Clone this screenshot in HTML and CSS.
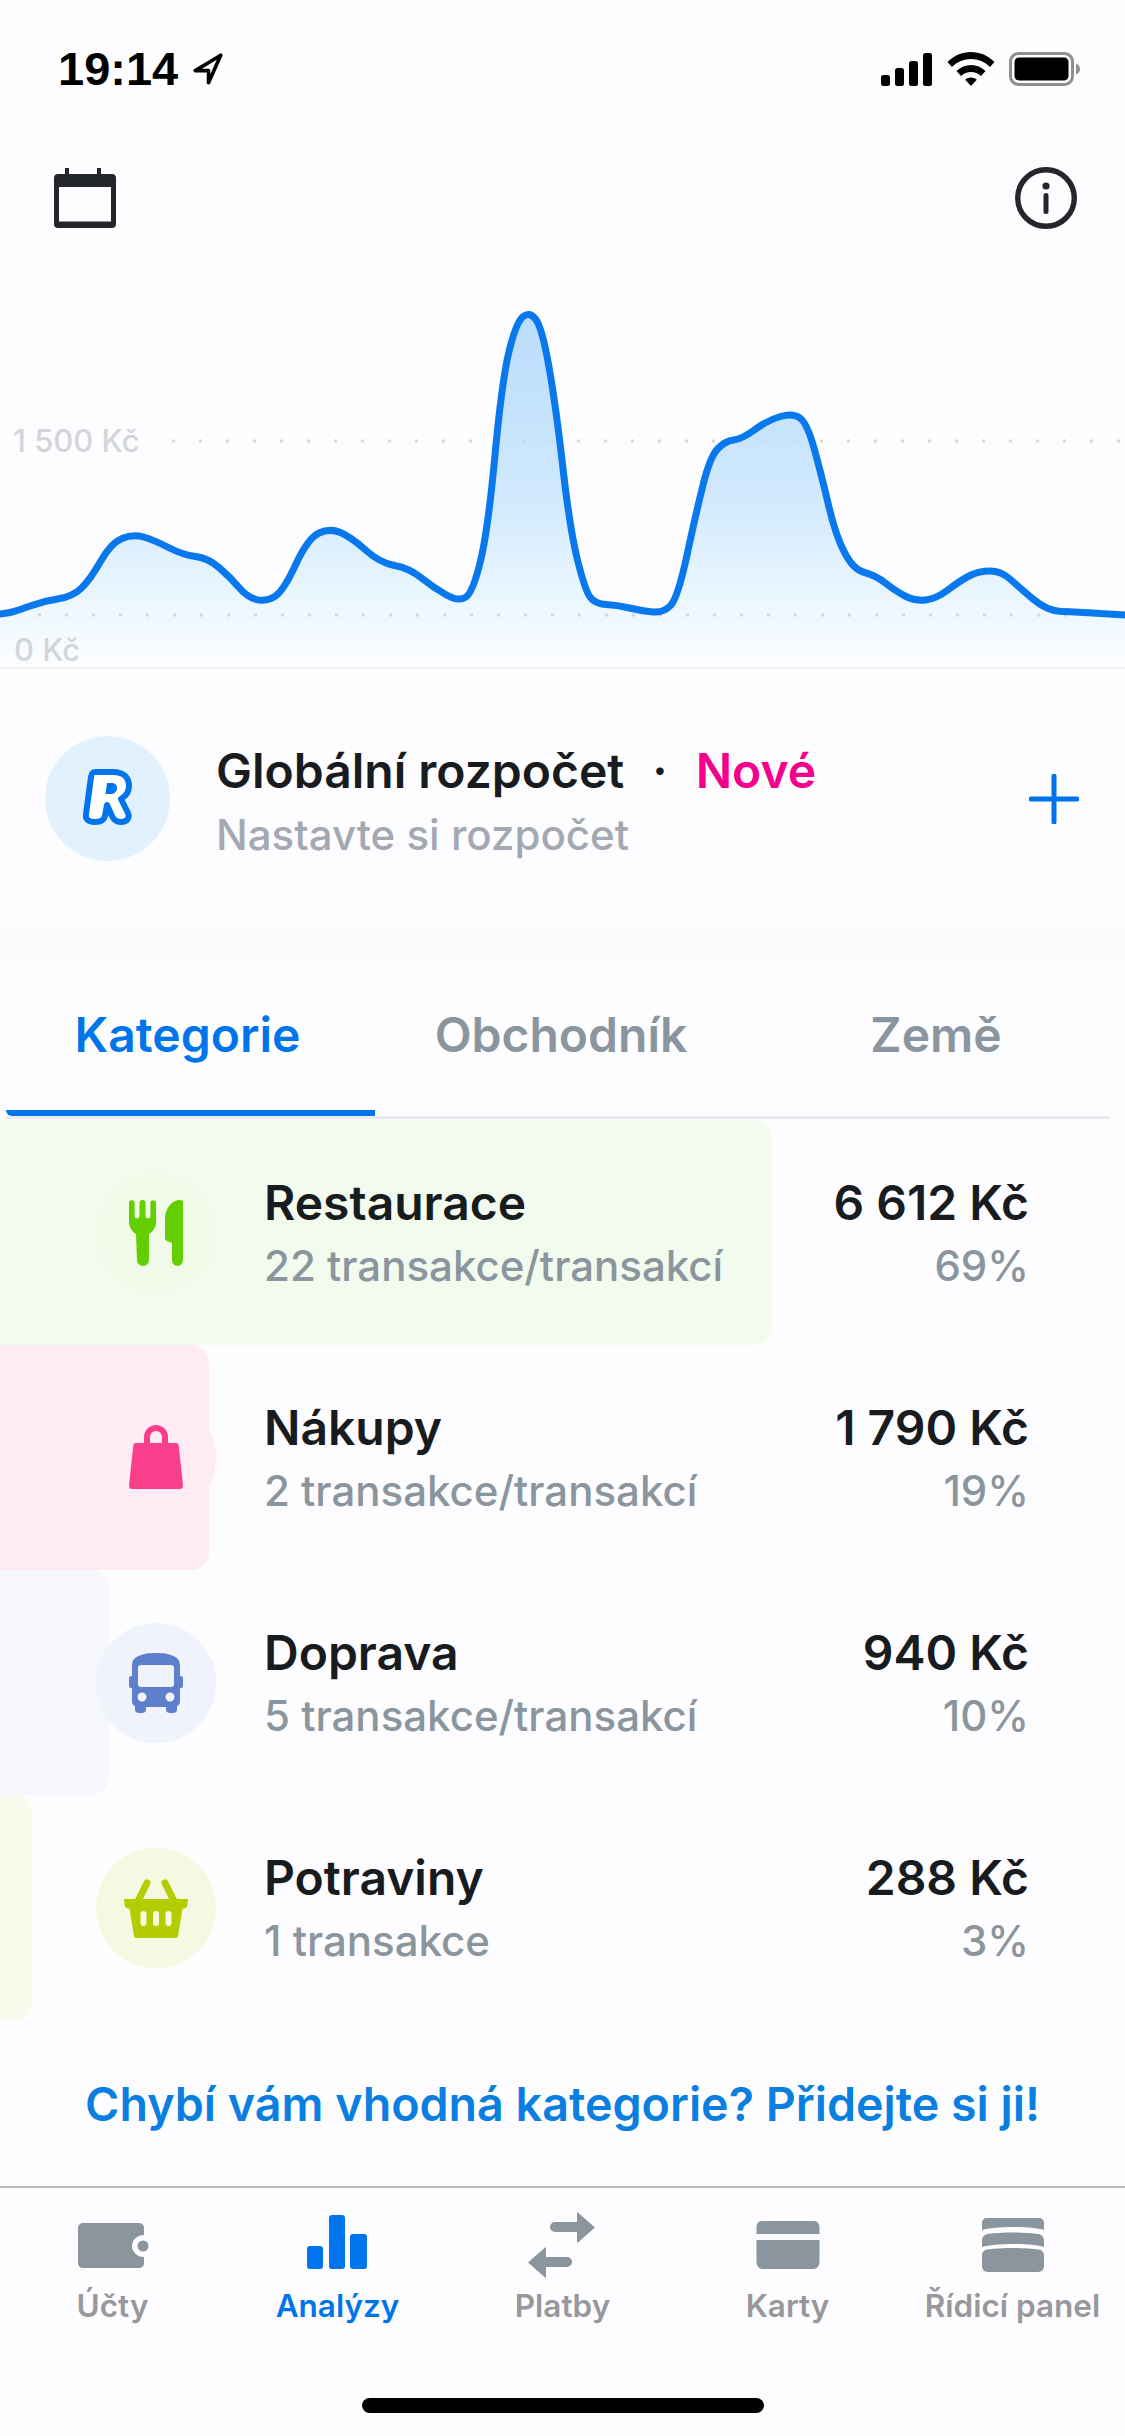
FILE: index.html
```html
<!DOCTYPE html>
<html lang="cs">
<head>
<meta charset="utf-8">
<title>Analýzy</title>
<link rel="stylesheet" href="styles.css">
</head>
<body>
<main class="screen">
  <header class="status">
    <div class="status-left">
      <span class="time">19:14</span>
      <svg class="loc" viewBox="0 0 30 32"><path d="M27 3 L3 17.500 H15.500 V29 Z" fill="none" stroke="#000" stroke-width="3.400" stroke-linejoin="round"/></svg>
    </div>
    <div class="status-right">
      <svg class="signal" viewBox="0 0 52 33"><rect x="0" y="22" width="9" height="11" rx="2.500"/><rect x="14" y="15" width="9" height="18" rx="2.500"/><rect x="28" y="8" width="9" height="25" rx="2.500"/><rect x="42" y="0" width="9" height="33" rx="2.500"/></svg>
      <svg class="wifi" viewBox="0 0 48 34"><path d="M24 0C15 0 7 3.500 0.500 10L5 15C10 9.800 17 7 24 7S38 9.800 43 15L47.500 10C41 3.500 33 0 24 0Z"/><path d="M24 13C18.500 13 13.500 15 9.500 19L14 24C16.800 21.300 20.300 20 24 20S31.200 21.300 34 24L38.500 19C34.500 15 29.500 13 24 13Z"/><path d="M24 25.500C21.800 25.500 19.800 26.300 18.200 27.800L24 34L29.800 27.800C28.200 26.300 26.200 25.500 24 25.500Z"/></svg>
      <svg class="battery" viewBox="0 0 72 34"><rect x="1.500" y="1.500" width="62" height="31" rx="8" fill="none" stroke="#8f8f8f" stroke-width="3"/><rect x="5.500" y="5.500" width="54" height="23" rx="4.500" fill="#000"/><path d="M67 11.500C69.500 12.500 71 14.500 71 17S69.500 21.500 67 22.500Z" fill="#8f8f8f"/></svg>
    </div>
  </header>

  <nav class="toolbar">
    <svg class="cal" viewBox="0 0 62 60"><path d="M11 0h4v7h-4zM43 0h4v7h-4z" fill="#23272b"/><path fill-rule="evenodd" d="M4 6H58A4 4 0 0 1 62 10V56A4 4 0 0 1 58 60H4A4 4 0 0 1 0 56V10A4 4 0 0 1 4 6ZM5 19V53.500H57V19Z" fill="#23272b"/></svg>
    <svg class="info" viewBox="0 0 62 62"><circle cx="31" cy="31" r="28.300" fill="none" stroke="#23272b" stroke-width="5.400"/><circle cx="31" cy="19" r="3.600" fill="#23272b"/><rect x="28.500" y="26" width="5" height="21" rx="2.500" fill="#23272b"/></svg>
  </nav>

  <section class="chart">
    <svg class="chart-svg" viewBox="0 255 1125 412">
      <defs>
        <linearGradient id="area" gradientUnits="userSpaceOnUse" x1="0" y1="310" x2="0" y2="667">
          <stop offset="0" stop-color="#b8dcfb"/>
          <stop offset="0.5" stop-color="#cfe8fd"/>
          <stop offset="0.8" stop-color="#e9f6fe"/>
          <stop offset="1" stop-color="#fdfdff"/>
        </linearGradient>
      </defs>
      <path class="area" d="M0 667 V614 L7 613 Q14 612 28.500 606.500 Q43 601 57.500 599 Q72 597 81 588.500 Q90 580 100.500 561.500 Q111 543 122 538.500 Q133 534 143.500 537 Q154 540 168.500 547.500 Q183 555 195.500 556.500 Q208 558 219 567.500 Q230 577 238.500 587 Q247 597 256 599.500 Q265 602 274 597 Q283 592 295.500 565 Q308 538 319 533 Q330 528 340.500 532.500 Q351 537 365.500 550 Q380 563 394.500 565.500 Q409 568 421.500 578 Q434 588 446.500 595 Q459 602 466 597 Q473 592 480.500 561 Q488 530 495 455 Q502 380 509 351.500 Q516 323 522.500 317 Q529 311 535.500 319 Q542 327 549 367 Q556 407 563 468.500 Q570 530 577.500 560 Q585 590 590 597 Q595 604 606 604.500 Q617 605 629.500 608 Q642 611 653 612 Q664 613 671 605 Q678 597 687 555 Q696 513 703 485 Q710 457 717.500 449 Q725 441 733.500 440 Q742 439 755 429.500 Q768 420 780.500 416.500 Q793 413 800 418 Q807 423 814 448 Q821 473 828.500 505 Q836 537 845 553.500 Q854 570 864.500 572.500 Q875 575 886 583.500 Q897 592 906 596.500 Q915 601 925.500 600 Q936 599 948.500 589.500 Q961 580 970 575.500 Q979 571 990 571 Q1001 571 1010 579 Q1019 587 1033 599 Q1047 611 1061.500 611.500 Q1076 612 1100.500 613.500 L1125 615 V667 Z"/>
      <line class="dots" x1="172" y1="441" x2="1125" y2="441"/>
      <line class="dots" x1="38" y1="615" x2="1125" y2="615"/>
      <path class="line" d="M0 614 L7 613 Q14 612 28.500 606.500 Q43 601 57.500 599 Q72 597 81 588.500 Q90 580 100.500 561.500 Q111 543 122 538.500 Q133 534 143.500 537 Q154 540 168.500 547.500 Q183 555 195.500 556.500 Q208 558 219 567.500 Q230 577 238.500 587 Q247 597 256 599.500 Q265 602 274 597 Q283 592 295.500 565 Q308 538 319 533 Q330 528 340.500 532.500 Q351 537 365.500 550 Q380 563 394.500 565.500 Q409 568 421.500 578 Q434 588 446.500 595 Q459 602 466 597 Q473 592 480.500 561 Q488 530 495 455 Q502 380 509 351.500 Q516 323 522.500 317 Q529 311 535.500 319 Q542 327 549 367 Q556 407 563 468.500 Q570 530 577.500 560 Q585 590 590 597 Q595 604 606 604.500 Q617 605 629.500 608 Q642 611 653 612 Q664 613 671 605 Q678 597 687 555 Q696 513 703 485 Q710 457 717.500 449 Q725 441 733.500 440 Q742 439 755 429.500 Q768 420 780.500 416.500 Q793 413 800 418 Q807 423 814 448 Q821 473 828.500 505 Q836 537 845 553.500 Q854 570 864.500 572.500 Q875 575 886 583.500 Q897 592 906 596.500 Q915 601 925.500 600 Q936 599 948.500 589.500 Q961 580 970 575.500 Q979 571 990 571 Q1001 571 1010 579 Q1019 587 1033 599 Q1047 611 1061.500 611.500 Q1076 612 1100.500 613.500 L1125 615"/>
      <text class="axis" x="13" y="452">1 500 Kč</text>
      <text class="axis" x="14" y="661">0 Kč</text>
    </svg>
  </section>

  <section class="budget">
    <div class="avatar">
      <svg class="logo" viewBox="0 0 50 56"><path d="M12 3H30C41 3 46 9 46 17C46 23 43 27 38 30L45 44C47 49 44 53 38 53C34 53 31 52 29 47L24 36L22 47C21 51 18 53 12 53C5 53 2 50 3 45L8 8C8.500 5 9 3 12 3Z" fill="#fff" stroke="#0075eb" stroke-width="6" stroke-linejoin="round"/><path d="M24 14H28C32 14 34 16 34 19C34 23 31 25 27 25H22.500Z" fill="#0075eb"/></svg>
    </div>
    <div class="budget-text">
      <div class="budget-title"><span>Globální rozpočet</span><span class="sep">·</span><span class="new">Nové</span></div>
      <div class="budget-sub">Nastavte si rozpočet</div>
    </div>
    <svg class="plus" viewBox="0 0 50 50"><path d="M25 2V48M2 25H48" stroke="#0075eb" stroke-width="5" stroke-linecap="round"/></svg>
  </section>

  <section class="tabs-wrap">
    <div class="tabs">
      <div class="tab active">Kategorie</div>
      <div class="tab">Obchodník</div>
      <div class="tab">Země</div>
    </div>
    <div class="indicator"></div>
    <div class="track"></div>
  </section>

  <section class="rows">
    <article class="row">
      <div class="bar bar-green" style="width:772px"></div>
      <div class="row-body">
        <div class="cat cat-green">
          <svg viewBox="0 0 120 120"><path fill="#63cf00" d="M33 30A2.800 2.800 0 0 1 38.600 30V43A2.400 2.400 0 0 0 43.500 43V30A2.900 2.900 0 0 1 49.500 30V43A2.400 2.400 0 0 0 54.400 43V30A2.800 2.800 0 0 1 60 30V49C60 55 56 59 53 61L53 87A6 6 0 0 1 41 87L40 61C37 59 33 55 33 49Z"/><path fill="#63cf00" d="M87 29V87A5.500 6 0 0 1 76 87V70L71 68Q69 67.500 69 65V46C69 35 76 27 84 27Q87 27 87 29Z"/></svg>
        </div>
        <div class="row-main"><div class="row-title">Restaurace</div><div class="row-sub">22 transakce/transakcí</div></div>
        <div class="row-side"><div class="row-title">6 612 Kč</div><div class="row-sub">69%</div></div>
      </div>
    </article>
    <article class="row">
      <div class="bar bar-pink" style="width:209px"></div>
      <div class="row-body">
        <div class="cat cat-pink">
          <svg viewBox="0 0 120 120"><path fill="#f93f8c" fill-rule="evenodd" d="M48 45V39A12 12 0 0 1 72 39V45H80C81.500 45 82.500 46 82.700 47.500L87 87C87.300 89.500 86 91 84 91H36C34 91 32.700 89.500 33 87L37.300 47.500C37.500 46 38.500 45 40 45ZM54 45H66V39A6 6 0 0 0 54 39Z"/></svg>
        </div>
        <div class="row-main"><div class="row-title">Nákupy</div><div class="row-sub">2 transakce/transakcí</div></div>
        <div class="row-side"><div class="row-title">1 790 Kč</div><div class="row-sub">19%</div></div>
      </div>
    </article>
    <article class="row">
      <div class="bar bar-grey" style="width:109px"></div>
      <div class="row-body">
        <div class="cat cat-blue">
          <svg viewBox="0 0 120 120"><path fill="#5e80cc" fill-rule="evenodd" d="M36 42C36 33 47 30 60 30S84 33 84 42V53H85C86 53 87 54 87 55V63C87 64 86 65 85 65H84V78C84 81 83 82 81 83V87C81 89 79 90 77 90H74C72 90 70 89 70 87V84H50V87C50 89 48 90 46 90H43C41 90 39 89 39 87V83C37 82 36 81 36 78V65H35C34 65 33 64 33 63V55C33 54 34 53 35 53H36ZM45 42C43 42 42 43 42 45V61C42 63 43 64 45 64H75C77 64 78 63 78 61V45C78 43 77 42 75 42ZM46 69.500A4.500 4.500 0 1 0 46 78.500A4.500 4.500 0 1 0 46 69.500ZM74 69.500A4.500 4.500 0 1 0 74 78.500A4.500 4.500 0 1 0 74 69.500Z"/></svg>
        </div>
        <div class="row-main"><div class="row-title">Doprava</div><div class="row-sub">5 transakce/transakcí</div></div>
        <div class="row-side"><div class="row-title">940 Kč</div><div class="row-sub">10%</div></div>
      </div>
    </article>
    <article class="row">
      <div class="bar bar-lime" style="width:33px"></div>
      <div class="row-body">
        <div class="cat cat-lime">
          <svg viewBox="0 0 120 120"><path d="M42 53L51 35M78 53L69 35" stroke="#b4cd00" stroke-width="7" stroke-linecap="round"/><path fill="#b4cd00" fill-rule="evenodd" d="M28 51H92L91.500 57C91.300 59 90 60 86.500 61L82 88C81.800 89.500 81 90 79 90H41C39 90 38.200 89.500 38 88L33.500 61C30 60 28.700 59 28.500 57ZM47.500 63A3 3 0 0 0 44.500 66V75A3 3 0 0 0 50.500 75V66A3 3 0 0 0 47.500 63ZM60 63A3 3 0 0 0 57 66V75A3 3 0 0 0 63 75V66A3 3 0 0 0 60 63ZM72.500 63A3 3 0 0 0 69.500 66V75A3 3 0 0 0 75.500 75V66A3 3 0 0 0 72.500 63Z"/></svg>
        </div>
        <div class="row-main"><div class="row-title">Potraviny</div><div class="row-sub">1 transakce</div></div>
        <div class="row-side"><div class="row-title">288 Kč</div><div class="row-sub">3%</div></div>
      </div>
    </article>
  </section>

  <div class="add-link">Chybí vám vhodná kategorie? Přidejte si ji!</div>

  <footer class="tabbar">
    <div class="bar-items">
      <div class="item">
        <svg viewBox="0 0 80 70"><path fill="#8b959e" d="M11 13H65C69 13 71 15 71 18V25A12 11 0 0 0 71 47V53C71 56 69 58 65 58H11C7 58 5 56 5 53V18C5 15 7 13 11 13Z"/><circle cx="70" cy="36" r="5.500" fill="#8b959e"/></svg>
        <span>Účty</span>
      </div>
      <div class="item active">
        <svg viewBox="0 0 80 70"><rect x="9" y="36" width="16" height="23" rx="3" fill="#0075eb"/><rect x="31" y="5" width="16" height="54" rx="3" fill="#0075eb"/><rect x="52" y="24" width="17" height="35" rx="3" fill="#0075eb"/></svg>
        <span>Analýzy</span>
      </div>
      <div class="item">
        <svg viewBox="0 0 80 70"><path fill="#8b959e" d="M27 17A5 5 0 0 1 32 12H54V3C54 2 55 2 55.500 3L72 17.500L55.500 32C55 33 54 33 54 32V22H32A5 5 0 0 1 27 17Z"/><path fill="#8b959e" d="M49 52A5 5 0 0 0 44 47H23V38C23 37 22 37 21.500 38L5 52.500L21.500 67C22 68 23 68 23 67V57H44A5 5 0 0 0 49 52Z"/></svg>
        <span>Platby</span>
      </div>
      <div class="item">
        <svg viewBox="0 0 80 70"><path fill="#8b959e" d="M14 11H66C70 11 71.500 14 71.500 18V24H8.500V18C8.500 14 10 11 14 11ZM8.500 30H71.500V52C71.500 56 69 59 65 59H15C11 59 8.500 56 8.500 52Z"/></svg>
        <span>Karty</span>
      </div>
      <div class="item">
        <svg viewBox="0 0 80 70"><path fill="#8b959e" d="M9 13C9 10 11 8 14 8H66C69 8 71 10 71 13V20C65 18 52 17 40 17S15 18 9 20ZM9 30C9 27 11 25 14 24C22 23 30 22.500 40 22.500S58 23 66 24C69 25 71 27 71 30V37C65 35 52 34 40 34S15 35 9 37ZM9 46C9 42 11 40 14 39.500C22 38.500 30 38 40 38S58 38.500 66 39.500C69 40 71 42 71 46V56C71 59 69 62 65 62H15C11 62 9 59 9 56Z"/></svg>
        <span>Řídicí panel</span>
      </div>
    </div>
    <div class="home"></div>
  </footer>
</main>
</body>
</html>
```

FILE: styles.css
```css
* { box-sizing: border-box; }
html, body { margin: 0; padding: 0; }
body { background: #fdfdff; font-family: Inter, "Noto Sans", sans-serif; }
.screen { width: 1125px; height: 2436px; overflow: hidden; display: flex; flex-direction: column; background: #fdfdff; }

.status { height: 140px; flex: none; display: flex; justify-content: space-between; align-items: flex-start; padding: 50px 44px 0 58px; }
.status-left { display: flex; align-items: center; gap: 14px; height: 38px; }
.time { font: 700 47px/38px "Liberation Sans", Inter, sans-serif; color: #000; }
.loc { width: 32px; height: 34px; }
.status-right { display: flex; align-items: center; gap: 14px; height: 38px; }
.signal { width: 52px; height: 33px; }
.wifi { width: 48px; height: 34px; }
.battery { width: 72px; height: 34px; }

.toolbar { height: 115px; flex: none; display: flex; justify-content: space-between; align-items: center; padding: 0 48px 0 54px; }
.cal { width: 62px; height: 60px; }
.info { width: 62px; height: 62px; }

.chart { height: 414px; flex: none; border-bottom: 2px solid #f0f1f4; }
.chart-svg { display: block; width: 1125px; height: 412px; }
.area { fill: url(#area); }
.line { fill: none; stroke: #0878ec; stroke-width: 7; stroke-linecap: round; stroke-linejoin: round; }
.dots { stroke: #d4d8dc; stroke-width: 3; stroke-dasharray: 3 24; }
.axis { font: 500 31px Inter, sans-serif; fill: #d2d5da; }

.budget { height: 259px; flex: none; display: flex; align-items: center; padding: 0 46px 0 45px; }
.avatar { width: 125px; height: 125px; border-radius: 50%; background: #e2f1fe; display: flex; align-items: center; justify-content: center; flex: none; padding-bottom: 4px; }
.logo { width: 50px; height: 56px; }
.budget-text { flex: 1; margin-left: 46px; padding-top: 5px; }
.budget-title { display: flex; align-items: baseline; font-size: 48px; line-height: 56px; font-weight: 600; color: #191c1f; }
.sep { margin: 0 28px; }
.new { color: #f5008c; }
.budget-sub { font-size: 42px; line-height: 50px; font-weight: 500; color: #a3a9b2; margin-top: 11px; }
.plus { width: 50px; height: 50px; flex: none; }

.tabs-wrap { height: 192px; flex: none; display: flex; flex-direction: column; background: linear-gradient(#fafafc, #fdfdff 60px); }
.tabs { height: 182px; display: grid; grid-template-columns: 375px 372px 378px; align-items: center; padding-top: 30px; }
.tab { text-align: center; font-size: 48px; font-weight: 600; color: #8b95a0; }
.tab.active { color: #0075eb; }
.indicator { width: 369px; height: 6px; margin-left: 6px; background: #0075eb; border-bottom-left-radius: 6px; }
.track { height: 3px; margin: 0 15px 0 6px; background: #e8eaed; }

.rows { flex: none; display: flex; flex-direction: column; }
.row { height: 225px; display: grid; }
.bar, .row-body { grid-area: 1 / 1; }
.bar { border-radius: 0 18px 18px 0; height: 225px; }
.bar-green { background: #f3fbee; }
.bar-pink { background: #ffebf3; }
.bar-grey { background: #f5f7fa; }
.bar-lime { background: #f8fcec; }
.row-body { display: flex; align-items: center; padding: 0 96px 0 96px; }
.cat { width: 120px; height: 120px; border-radius: 50%; flex: none; }
.cat svg { display: block; width: 120px; height: 120px; }
.cat-green { background: #f1f9e9; }
.cat-pink { background: #ffebf3; }
.cat-blue { background: #f0f3fc; }
.cat-lime { background: #f6f9e1; }
.row-main { flex: 1; margin-left: 48px; }
.row-side { text-align: right; }
.row-title { font-size: 48px; line-height: 56px; font-weight: 600; color: #191c1f; }
.row-sub { font-size: 42px; line-height: 50px; font-weight: 500; color: #8b959e; margin-top: 10px; }

.add-link { height: 166px; flex: none; display: flex; align-items: center; justify-content: center; padding-top: 2px; font-size: 46.600px; font-weight: 600; color: #0a7fe0; }

.tabbar { flex: 1; border-top: 2px solid #b8b8b8; display: flex; flex-direction: column; }
.bar-items { display: flex; padding-top: 22px; }
.item { flex: 1; display: flex; flex-direction: column; align-items: center; font-size: 31.500px; line-height: 36px; font-weight: 600; color: #98989c; }
.item.active { color: #0075eb; }
.item svg { width: 80px; height: 70px; margin-bottom: 8px; }
.home { width: 402px; height: 15px; border-radius: 8px; background: #000; margin: 74px auto 0; }
```
